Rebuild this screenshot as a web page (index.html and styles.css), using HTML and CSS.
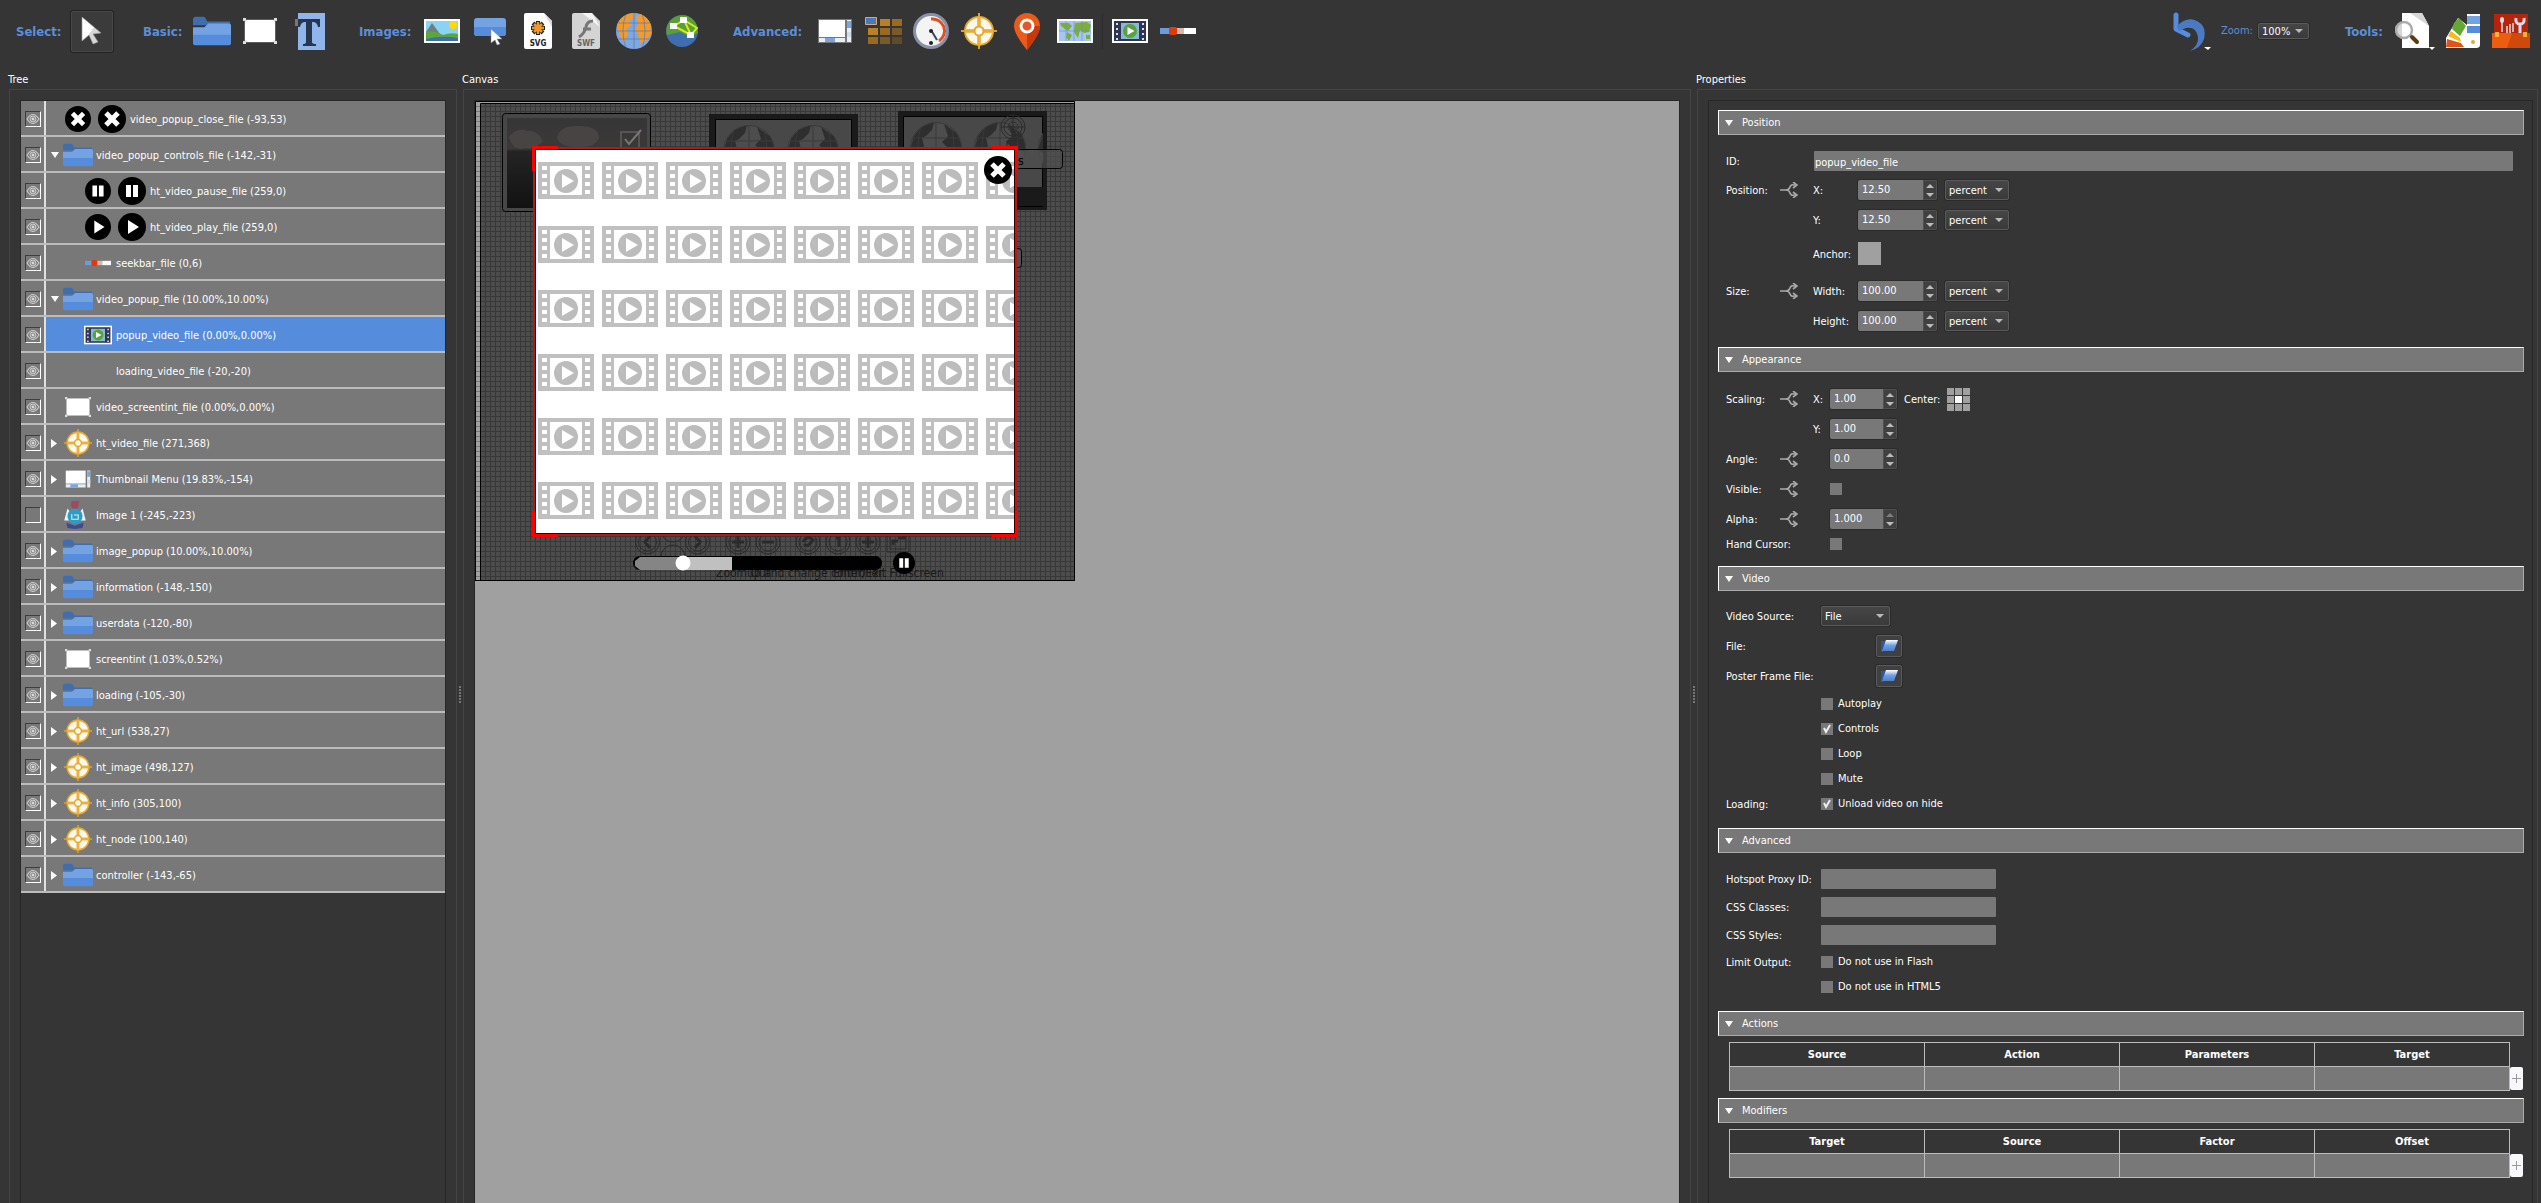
FILE: index.html
```html
<!DOCTYPE html>
<html lang="en">
<head>
<meta charset="utf-8">
<title>Skin Editor</title>
<link rel="stylesheet" href="styles.css">
</head>
<body>
<svg class="sprite" aria-hidden="true">
  <defs>
    <linearGradient id="cursorFill" x1="0" y1="0" x2="1" y2="1"><stop offset=".5" stop-color="#fff"/><stop offset=".5" stop-color="#d8d8d8"/></linearGradient>
    <linearGradient id="openFill" x1="0" y1="0" x2="0" y2="1"><stop offset="0" stop-color="#fff"/><stop offset=".5" stop-color="#6f9fe0"/><stop offset="1" stop-color="#4a80d0"/></linearGradient>
    <clipPath id="globeClip"><circle cx="18" cy="18" r="18"/></clipPath>
    <clipPath id="darkGlobeClip"><circle cx="26" cy="26" r="26"/></clipPath>
  </defs>
  <symbol id="folder" viewBox="0 0 40 30"><path fill="#3f6eb0" d="M0 3q0-3 3-3h8q2 0 4 5l24 0v4H0z"/><path fill="#74a3e3" d="M0 11h12l4-4h22q2 0 2 2v11H0z"/><path fill="#558cdc" d="M0 19h40v9q0 2-2 2H2q-2 0-2-2z"/></symbol>
  <symbol id="rect" viewBox="0 0 34 26"><path fill="none" stroke="#888" d="M2 2h30v22H2z"/><rect x="2" y="2" width="30" height="22" rx="2" fill="#fff"/><path fill="#ddd" d="M0 0h3v3H0zM31 0h3v3h-3zM0 23h3v3H0zM31 23h3v3h-3z"/></symbol>
  <symbol id="target" viewBox="0 0 36 36"><circle cx="18" cy="18" r="14" fill="#fff7ec" stroke="#e2a92f" stroke-width="2"/><path stroke="#dfa224" stroke-width="2" d="M18 0v36M0 18h36"/><path stroke="#eebc55" stroke-width="4" fill="none" d="M18 4v9M18 23v9M4 18h9M23 18h9"/><path stroke="#dfa224" stroke-width="1" d="M18 4v9M18 23v9M4 18h9M23 18h9"/><circle cx="18" cy="18" r="4.500" fill="#fff7ec" stroke="#e2a92f" stroke-width="2"/></symbol>
  <symbol id="thumbs" viewBox="0 0 34 24"><path fill="#777" d="M0 0h34v24H0z"/><path fill="#fff" d="M1 1h26v17H1z"/><path fill="#e8eef6" d="M29 1h4v22h-4zM1 19h26v4H1z"/><path fill="#7ba5dc" d="M29 2h4v7h-4zM7 19h10v4H7z"/><path fill="#d0ddeb" d="M29 13h4v5h-4z"/></symbol>
  <symbol id="film" viewBox="0 0 36 24"><path fill="#fff" d="M0 0h36v24H0z"/><path fill="#2d3552" d="M2 2h32v20H2z"/><path fill="#8ab6d8" d="M9 4h18v16H9z"/><circle cx="18" cy="12" r="7" fill="#54a33c"/><path fill="#fff" d="M15.500 8l7 4-7 4z"/><path stroke="#ddd" stroke-width="2" stroke-dasharray="2 3" d="M5 4v17M31 4v17"/></symbol>
  <symbol id="seek" viewBox="0 0 36 8"><path fill="#6a9bdc" d="M0 1h10v6H0z"/><path fill="#d9b7ad" d="M15 1h9v6h-9z"/><path fill="#fff" d="M24 1h12v6H24z"/><rect x="9" y="0" width="8" height="8" rx="2" fill="#e23a05"/></symbol>
  <symbol id="close" viewBox="0 0 28 28"><circle cx="14" cy="14" r="14"/><path stroke="#fff" stroke-width="5" d="M8 8l12 12M20 8L8 20"/></symbol>
  <symbol id="pause" viewBox="0 0 28 28"><circle cx="14" cy="14" r="14"/><path fill="#fff" d="M8 8h5v12H8zM15 8h5v12h-5z"/></symbol>
  <symbol id="play" viewBox="0 0 28 28"><circle cx="14" cy="14" r="14"/><path fill="#fff" d="M10 7l11 7-11 7z"/></symbol>
  <symbol id="badge" viewBox="0 0 20 26"><path fill="#a04a62" d="M7 0h7l-1 5-1 3H8L6 4z"/><path fill="#e7f3fa" d="M3 7l3 4h8l3-4 3 11H0z"/><circle cx="10" cy="14" r="7" fill="#2f9cc4"/><path fill="none" stroke="#d5eef8" stroke-width="1" d="M7 12v5h6v-4H9"/><path fill="#3b4c92" d="M2 20l8 3 8-3-1 5-7 1-7-1z"/></symbol>
  <symbol id="eye" viewBox="0 0 14 14"><path fill="none" stroke="#c8c8c8" stroke-width="1.200" d="M1 7q6-9 12 0-6 9-12 0z"/><circle cx="7" cy="7" r="3" fill="#9a9a9a" stroke="#ccc"/><circle cx="7" cy="7" r="1" fill="#eee"/></symbol>
  <symbol id="down" viewBox="0 0 8 6"><path fill="#fff" d="M0 0h8L4 6z"/></symbol>
  <symbol id="right" viewBox="0 0 6 9"><path fill="#fff" d="M0 0l6 4.500L0 9z"/></symbol>
  <symbol id="branch" viewBox="0 0 18 16"><path fill="none" stroke="#aaa" stroke-width="1.600" d="M0 8h6q3 0 4-3t4-2h2M6 8q3 0 4 3t4 2h2"/><path fill="none" stroke="#aaa" stroke-width="1.600" d="M13 0l4 3-4 3M13 10l4 3-4 3"/></symbol>
  <symbol id="open" viewBox="0 0 18 12"><path fill="#2c57a0" d="M1 1h5l1 2-4 9H1z"/><path fill="url(#openFill)" d="M6 0h12l-4 11H2z"/></symbol>
  <symbol id="up" viewBox="0 0 8 4"><path fill="#bbb" d="M0 4h8L4 0z"/></symbol>
  <symbol id="dn" viewBox="0 0 8 4"><path fill="#bbb" d="M0 0h8L4 4z"/></symbol>
  <symbol id="darkGlobe" viewBox="0 0 52 52"><circle cx="26" cy="26" r="26" fill="#4d4d4d"/><g clip-path="url(#darkGlobeClip)"><path fill="#2e2e2e" d="M4 14q8-12 20-14l-2 8-6 6-4 2 2 8-6 10-8-6zM34 2l14 10 6 18-14-2-8-8 6-6z"/><path fill="none" stroke="#3a3a3a" d="M0 16h52M0 27h52M26 0v52M12 0q-8 26 0 52M40 0q8 26 0 52"/></g><circle cx="26" cy="26" r="25.500" fill="none" stroke="#3a3a3a"/></symbol>
</svg>

<header class="toolbar">
  <div class="tool-group">
    <span class="tool-label label-select">Select:</span>
    <button class="tool tool-active" aria-label="Select"><svg width="22" height="28" viewBox="0 0 22 28"><path fill="url(#cursorFill)" stroke="#999" stroke-width=".6" d="M1 0l19 16-8 1 5 8-5 2-4-9-7 6z"/></svg></button>
  </div>
  <div class="tool-group">
    <span class="tool-label label-basic">Basic:</span>
    <button class="tool" aria-label="Container"><svg width="38" height="30"><use href="#folder"/></svg></button>
    <button class="tool" aria-label="Rectangle"><svg width="34" height="26"><use href="#rect"/></svg></button>
    <button class="tool" aria-label="Text"><svg width="36" height="37" viewBox="-5 0 36 37"><path fill="#8fb5ea" d="M3 0h27v37H3z"/><path fill="#777" d="M0 6h5v7H0z"/><path fill="#27364f" d="M3 6h22v8h-2q-1-5-5-5h-1v20q0 2 4 2v2H8v-2q3 0 3-2V9h-1q-4 0-5 5H3z"/></svg></button>
  </div>
  <div class="tool-group">
    <span class="tool-label label-images">Images:</span>
    <button class="tool" aria-label="Image"><svg width="36" height="24" viewBox="0 0 36 24"><path fill="#fff" d="M0 0h36v24H0z"/><path fill="#8ad3f3" d="M2 2h32v20H2z"/><path fill="#6f7f80" d="M2 13l6-9 8 11z"/><path fill="#5aa83c" d="M2 12q10 0 17 4 8-3 15-1v5H2z"/><path fill="#3f6eb0" d="M2 20q16-4 32-1v3H2z"/><circle cx="29" cy="6" r="4" fill="#ffd900"/></svg></button>
    <button class="tool" aria-label="Button"><svg width="32" height="27" viewBox="0 0 32 27"><rect width="32" height="18" rx="3" fill="#74a3e3"/><path fill="#558cdc" d="M0 9h32v6q0 3-3 3H3q-3 0-3-3z"/><path fill="#fff" stroke="#888" stroke-width=".5" d="M17 11l11 10-5 0 3 5-3 1-2-5-4 3z"/></svg></button>
    <button class="tool" aria-label="SVG"><svg width="28" height="36" viewBox="0 0 28 36"><path fill="#fff" d="M2 0h18l8 8v26q0 2-2 2H2q-2 0-2-2V2q0-2 2-2z"/><path fill="#d8d8d8" d="M20 0l8 14V8z"/><g stroke="#222" stroke-width="4"><path d="M14 8v14M7 15h14M9 10l10 10M19 10L9 20"/></g><g stroke="#f0972c" stroke-width="2.500"><path d="M14 9v12M8 15h12M10 11l8 8M18 11l-8 8"/></g><text class="file-tag" x="14" y="33">SVG</text></svg></button>
    <button class="tool" aria-label="SWF"><svg width="28" height="36" viewBox="0 0 28 36"><path fill="#d4d4d4" d="M2 0h18l8 8v26q0 2-2 2H2q-2 0-2-2V2q0-2 2-2z"/><path fill="#f5f5f5" d="M10 0h10l8 14z"/><path fill="none" stroke="#777" stroke-width="3" d="M21 8q-6 0-7 6t-7 10M11 16h8"/><text class="file-tag file-tag-dim" x="14" y="33">SWF</text></svg></button>
    <button class="tool" aria-label="Globe"><svg width="36" height="36" viewBox="0 0 36 36"><g clip-path="url(#globeClip)"><path fill="#7fa8e0" d="M0 0h36v36H0z"/><path fill="#f29a2e" d="M0 10Q6 0 18 0l-1 5-4 3 3 4-6 4 2 5-4 8-4-6zM20 4l5-4q8 4 11 12l-2 4 2 4-6 8-6 2-2-9-3-4 3-6z"/><path fill="none" stroke="#4a74b4" stroke-width=".6" d="M0 10h36M0 18h36M0 26h36M18 0v36M10 0q-6 18 0 36M26 0q6 18 0 36"/></g></svg></button>
    <button class="tool" aria-label="Map globe"><svg width="32" height="32" viewBox="0 0 32 32"><circle cx="16" cy="16" r="16" fill="#3f6eb0"/><path fill="#58a030" d="M3 7Q10-2 22 1q10 5 10 17l-8 4-10-5-13 3q-2-7 2-13z"/><path fill="none" stroke="#d8ea20" stroke-width="2" d="M8 11l10-6 7 15-17-9M18 5l13 8-6 7"/><path fill="#fff" d="M14 2h7v6h-7zM4 8h7v6H4zM21 17h7v6h-7z"/></svg></button>
  </div>
  <div class="tool-group">
    <span class="tool-label label-advanced">Advanced:</span>
    <button class="tool" aria-label="Thumbnail menu"><svg width="34" height="24"><use href="#thumbs"/></svg></button>
    <button class="tool" aria-label="Cloner"><svg width="37" height="28" viewBox="0 0 37 28"><path fill="#b98024" d="M15 2h10v7H15zM3 11h10v7H3z"/><path fill="#9a6a22" d="M27 2h10v7H27zM15 11h10v7H15zM3 20h10v7H3z"/><path fill="#7a5a28" d="M27 11h10v7H27zM15 20h10v7H15z"/><path fill="#5f4a2a" d="M27 20h10v7H27z"/><path fill="#4a78b8" stroke="#d9a778" d="M.5.5h11v7H.5z"/></svg></button>
    <button class="tool" aria-label="Timer"><svg width="36" height="36" viewBox="0 0 36 36"><circle cx="18" cy="18" r="16.500" fill="#f4f4f4" stroke="#8b8fa8" stroke-width="3"/><path fill="none" stroke="#d9531f" stroke-width="3" d="M18 6a12 12 0 0 1 8 22"/><path stroke="#3a4660" stroke-width="2" d="M18 17l6 10"/><circle cx="18" cy="18" r="2" fill="#222"/><circle cx="18" cy="30" r="2" fill="#222"/></svg></button>
    <button class="tool" aria-label="Hotspot template"><svg width="36" height="36"><use href="#target"/></svg></button>
    <button class="tool" aria-label="Marker"><svg width="26" height="37" viewBox="0 0 26 37"><path fill="#ea5a1b" d="M13 0a13 13 0 0 1 13 13q0 8-13 24Q0 21 0 13A13 13 0 0 1 13 0z"/><path fill="#c9380c" d="M13 13h13q0 8-13 24z"/><circle cx="13" cy="13" r="6" fill="#e2572a" stroke="#fff" stroke-width="3"/></svg></button>
    <button class="tool" aria-label="Map"><svg width="36" height="24" viewBox="0 0 36 24"><path fill="#fff" d="M0 0h36v24H0z"/><path fill="#a5c6ee" d="M2 2h32v20H2z"/><path fill="#7fae35" d="M3 4h9l3 3-4 5-3-2-4-3zM10 13l5 3-3 6-3-4zM18 4l12-1 4 3-2 7-5 1-4-3-2 8-4-6zM29 16h4v4h-4z"/><path stroke="#5b8fd9" stroke-width=".6" d="M9 2v20M17 2v20M25 2v20M2 12h32"/></svg></button>
    <span class="tool-divider"></span>
    <button class="tool" aria-label="Video"><svg width="36" height="24"><use href="#film"/></svg></button>
    <button class="tool" aria-label="Seekbar"><svg width="36" height="8"><use href="#seek"/></svg></button>
  </div>
  <div class="tool-group tool-group-end">
    <button class="tool tool-undo" aria-label="Undo"><svg width="38" height="39" viewBox="0 0 38 39"><path fill="none" stroke="#558cdc" stroke-width="5" stroke-linecap="round" stroke-linejoin="round" d="M3 3v14l12 6"/><path fill="#4a7ac4" d="M4 14Q14 4 24 9t7 18q-3 9-14 12 9-6 8-14-2-11-12-9l-7 3z"/><path fill="#fff" d="M31 35h7l-3 3z"/></svg></button>
    <label class="zoom-label" for="zoom">Zoom:</label>
    <select class="select select-zoom" id="zoom"><option>100%</option></select>
  </div>
  <div class="tool-group tool-group-last">
    <span class="tool-label label-tools">Tools:</span>
    <button class="tool" aria-label="Preview"><svg width="40" height="38" viewBox="0 0 40 38"><path fill="#fff" d="M7 1h20l7 13v22H7z"/><path fill="#d6d6d6" d="M15 1h12l7 13z"/><circle cx="9" cy="18" r="8" fill="#fff" fill-opacity=".8" stroke="#aaa" stroke-width="2.500"/><path stroke="#5b3c12" stroke-width="4" stroke-linecap="round" d="M17 25l5 5"/><path fill="#fff" d="M34 35h6l-3 3z"/></svg></button>
    <button class="tool" aria-label="Palette"><svg width="34" height="34" viewBox="0 0 34 34"><path fill="#fff" d="M0 34V24L12 4l9 7V0h13v31q0 3-4 3z"/><path fill="#62a833" d="M8 9l5-5 7 8-6 10-8-7z"/><path fill="#f6bd16" d="M5 17l9 7 1 4-13-6z"/><path fill="#e2531a" d="M1 25l14 4 3 4H0z"/><path fill="#74a3e3" d="M21 2h13v8H21z"/><path fill="#558cdc" d="M21 12h13v7H21z"/><circle cx="27" cy="28" r="2" fill="#e2a92f"/></svg></button>
    <button class="tool" aria-label="Toolbox"><svg width="38" height="34" viewBox="0 0 38 34"><path fill="#b5250c" d="M2 0h34v22H2z"/><path stroke="#e0e0e0" stroke-width="1.500" d="M10 6v12M15 12v7M18 10v9M21 9v9"/><ellipse cx="10" cy="6" rx="2" ry="3" fill="#e0e0e0"/><path fill="none" stroke="#dcdcf0" stroke-width="3" d="M24 4q-1 6 4 6t4-6M28 10v9"/><path fill="#ee5d0f" d="M0 19h38v15H0z"/><path fill="#cf4a0a" d="M20 19h18v15H15z"/><path fill="#f6b03c" d="M3 18h4v5H3zM31 18h4v5h-4z"/></svg></button>
  </div>
</header>

<main class="workspace">
  <section class="panel">
    <h2 class="panel-title">Tree</h2>
    <div class="panel-frame">
      <ul class="tree inner-frame">
        <li class="node"><button class="eye" aria-label="Toggle"><svg><use href="#eye"/></svg></button><div class="node-body"><span class="twist"></span><svg class="node-icon icon-round"><use href="#close"/></svg><svg class="node-icon"><use href="#close"/></svg><span class="node-name">video_popup_close_file (-93,53)</span></div></li>
        <li class="node"><button class="eye" aria-label="Toggle"><svg><use href="#eye"/></svg></button><div class="node-body"><span class="twist"><svg class="tw-down"><use href="#down"/></svg></span><svg class="node-icon"><use href="#folder"/></svg><span class="node-name">video_popup_controls_file (-142,-31)</span></div></li>
        <li class="node"><button class="eye" aria-label="Toggle"><svg><use href="#eye"/></svg></button><div class="node-body child"><span class="twist"></span><svg class="node-icon icon-round"><use href="#pause"/></svg><svg class="node-icon"><use href="#pause"/></svg><span class="node-name">ht_video_pause_file (259,0)</span></div></li>
        <li class="node"><button class="eye" aria-label="Toggle"><svg><use href="#eye"/></svg></button><div class="node-body child"><span class="twist"></span><svg class="node-icon icon-round"><use href="#play"/></svg><svg class="node-icon"><use href="#play"/></svg><span class="node-name">ht_video_play_file (259,0)</span></div></li>
        <li class="node"><button class="eye" aria-label="Toggle"><svg><use href="#eye"/></svg></button><div class="node-body child"><span class="twist"></span><svg class="node-icon icon-round"><use href="#seek"/></svg><span class="node-name">seekbar_file (0,6)</span></div></li>
        <li class="node"><button class="eye" aria-label="Toggle"><svg><use href="#eye"/></svg></button><div class="node-body"><span class="twist"><svg class="tw-down"><use href="#down"/></svg></span><svg class="node-icon"><use href="#folder"/></svg><span class="node-name">video_popup_file (10.00%,10.00%)</span></div></li>
        <li class="node"><button class="eye" aria-label="Toggle"><svg><use href="#eye"/></svg></button><div class="node-body child selected"><span class="twist"></span><svg class="node-icon icon-film"><use href="#film"/></svg><span class="node-name">popup_video_file (0.00%,0.00%)</span></div></li>
        <li class="node"><button class="eye" aria-label="Toggle"><svg><use href="#eye"/></svg></button><div class="node-body child"><span class="twist"></span><span class="node-icon"></span><span class="node-name">loading_video_file (-20,-20)</span></div></li>
        <li class="node"><button class="eye" aria-label="Toggle"><svg><use href="#eye"/></svg></button><div class="node-body"><span class="twist"></span><svg class="node-icon icon-round"><use href="#rect"/></svg><span class="node-name">video_screentint_file (0.00%,0.00%)</span></div></li>
        <li class="node"><button class="eye" aria-label="Toggle"><svg><use href="#eye"/></svg></button><div class="node-body"><span class="twist"><svg class="tw-right"><use href="#right"/></svg></span><svg class="node-icon"><use href="#target"/></svg><span class="node-name">ht_video_file (271,368)</span></div></li>
        <li class="node"><button class="eye" aria-label="Toggle"><svg><use href="#eye"/></svg></button><div class="node-body"><span class="twist"><svg class="tw-right"><use href="#right"/></svg></span><svg class="node-icon icon-round"><use href="#thumbs"/></svg><span class="node-name">Thumbnail Menu (19.83%,-154)</span></div></li>
        <li class="node"><button class="eye" aria-label="Toggle"></button><div class="node-body"><span class="twist"></span><svg class="node-icon icon-badge"><use href="#badge"/></svg><span class="node-name">Image 1 (-245,-223)</span></div></li>
        <li class="node"><button class="eye" aria-label="Toggle"><svg><use href="#eye"/></svg></button><div class="node-body"><span class="twist"><svg class="tw-right"><use href="#right"/></svg></span><svg class="node-icon"><use href="#folder"/></svg><span class="node-name">image_popup (10.00%,10.00%)</span></div></li>
        <li class="node"><button class="eye" aria-label="Toggle"><svg><use href="#eye"/></svg></button><div class="node-body"><span class="twist"><svg class="tw-right"><use href="#right"/></svg></span><svg class="node-icon"><use href="#folder"/></svg><span class="node-name">information (-148,-150)</span></div></li>
        <li class="node"><button class="eye" aria-label="Toggle"><svg><use href="#eye"/></svg></button><div class="node-body"><span class="twist"><svg class="tw-right"><use href="#right"/></svg></span><svg class="node-icon"><use href="#folder"/></svg><span class="node-name">userdata (-120,-80)</span></div></li>
        <li class="node"><button class="eye" aria-label="Toggle"><svg><use href="#eye"/></svg></button><div class="node-body"><span class="twist"></span><svg class="node-icon icon-round"><use href="#rect"/></svg><span class="node-name">screentint (1.03%,0.52%)</span></div></li>
        <li class="node"><button class="eye" aria-label="Toggle"><svg><use href="#eye"/></svg></button><div class="node-body"><span class="twist"><svg class="tw-right"><use href="#right"/></svg></span><svg class="node-icon"><use href="#folder"/></svg><span class="node-name">loading (-105,-30)</span></div></li>
        <li class="node"><button class="eye" aria-label="Toggle"><svg><use href="#eye"/></svg></button><div class="node-body"><span class="twist"><svg class="tw-right"><use href="#right"/></svg></span><svg class="node-icon"><use href="#target"/></svg><span class="node-name">ht_url (538,27)</span></div></li>
        <li class="node"><button class="eye" aria-label="Toggle"><svg><use href="#eye"/></svg></button><div class="node-body"><span class="twist"><svg class="tw-right"><use href="#right"/></svg></span><svg class="node-icon"><use href="#target"/></svg><span class="node-name">ht_image (498,127)</span></div></li>
        <li class="node"><button class="eye" aria-label="Toggle"><svg><use href="#eye"/></svg></button><div class="node-body"><span class="twist"><svg class="tw-right"><use href="#right"/></svg></span><svg class="node-icon"><use href="#target"/></svg><span class="node-name">ht_info (305,100)</span></div></li>
        <li class="node"><button class="eye" aria-label="Toggle"><svg><use href="#eye"/></svg></button><div class="node-body"><span class="twist"><svg class="tw-right"><use href="#right"/></svg></span><svg class="node-icon"><use href="#target"/></svg><span class="node-name">ht_node (100,140)</span></div></li>
        <li class="node"><button class="eye" aria-label="Toggle"><svg><use href="#eye"/></svg></button><div class="node-body"><span class="twist"><svg class="tw-right"><use href="#right"/></svg></span><svg class="node-icon"><use href="#folder"/></svg><span class="node-name">controller (-143,-65)</span></div></li>
      </ul>
    </div>
  </section>
  <div class="splitter"></div>
  <section class="panel">
    <h2 class="panel-title">Canvas</h2>
    <div class="panel-frame">
      <div class="canvas inner-frame">
        <svg class="stage" width="600" height="480" viewBox="0 0 600 480">
          <defs>
            <pattern id="grid" width="5" height="5" patternUnits="userSpaceOnUse"><path fill="#4c4c4c" d="M0 0h5v5H0z"/><path fill="#383838" d="M0 0h5v1H1v4H0z"/></pattern>
            <pattern id="ruler" width="6" height="5" patternUnits="userSpaceOnUse"><path fill="#a0a0a0" d="M0 0h6v5H0z"/><path fill="#777" d="M0 0h6v1H0z"/></pattern>
            <pattern id="reel" x="60" y="48" width="64" height="64" patternUnits="userSpaceOnUse"><path fill="#c0c0c0" fill-rule="evenodd" d="M3 13h56v37H3zM7 17v4h5v-4zM7 25v4h5v-4zM7 33v4h5v-4zM7 41v4h5v-4zM50 17v4h5v-4zM50 25v4h5v-4zM50 33v4h5v-4zM50 41v4h5v-4zM15 17v29h32V17z"/><circle cx="31" cy="32" r="12" fill="#bcbcbc"/><path fill="#fff" d="M27 25l12 7-12 7z"/></pattern>
            <clipPath id="thumb3"><path d="M429 16h139v89H429z"/></clipPath>
            <linearGradient id="photo" x1="0" y1="0" x2="0" y2="1"><stop offset="0" stop-color="#363636"/><stop offset=".34" stop-color="#3c3838"/><stop offset=".37" stop-color="#242424"/><stop offset="1" stop-color="#121212"/></linearGradient>
          </defs>
          <path fill="url(#ruler)" d="M0 0h600v480H0z"/>
          <path fill="url(#grid)" d="M6 3h594v477H6z"/>
          <path fill="none" stroke="#000" d="M.5 480V.5h599M5.500 480V2.500H600M599.500 0v479.500H0"/>
          <rect x="27.500" y="12.500" width="148" height="98" rx="3" fill="#474747" stroke="#000"/>
          <path fill="url(#photo)" d="M32 17h140v90H32z"/>
          <path fill="#484444" d="M34 36q8-10 18-6 10-2 16 10-8 9-18 7-12 4-16-11zM82 37q2-13 22-12 20 0 20 12-4 10-20 9-18 1-22-9z"/>
          <path fill="none" stroke="#555" stroke-width="2" d="M146 31h18v16h-18z"/><path fill="none" stroke="#777" stroke-width="2" d="M150 38l4 5 12-14"/>
          <path fill="#1a1a1a" d="M234 13h149v99H234z"/><path fill="#484848" stroke="#000" d="M240.500 18.500h136v90h-136z"/>
          <svg x="248" y="24" width="52" height="52"><use href="#darkGlobe"/></svg><svg x="312" y="24" width="52" height="52"><use href="#darkGlobe"/></svg>
          <path fill="#1a1a1a" d="M423 10h149v99H423z"/><path fill="#484848" stroke="#000" d="M428.500 15.500h139v90h-139z"/>
          <g clip-path="url(#thumb3)"><svg x="435" y="21" width="52" height="52"><use href="#darkGlobe"/></svg><svg x="499" y="21" width="52" height="52"><use href="#darkGlobe"/></svg><svg x="563" y="21" width="52" height="52"><use href="#darkGlobe"/></svg><path fill="#1a1a1a" d="M429 86h139v20H429z"/></g>
          <g fill="none" stroke="#2a2a2a"><circle cx="538" cy="26" r="12"/><circle cx="538" cy="26" r="9"/><circle cx="538" cy="26" r="5" stroke-dasharray="2 1"/><path d="M526 26h24M538 14v24M532 40h14v6h-14z"/></g>
          <rect x="500.500" y="48.500" width="87" height="19" rx="3" fill="#505050" fill-opacity=".7" stroke="#000"/><text class="stage-text" x="543" y="64">s</text>
          <rect x="500.500" y="147.500" width="46" height="19" rx="3" fill="#505050" stroke="#000"/>
          <g fill="none" stroke="#2a2a2a"><g stroke-width="1"><circle cx="172.500" cy="441" r="12"/><circle cx="172.500" cy="441" r="9"/><circle cx="198" cy="429" r="12"/><circle cx="198" cy="456" r="12"/><circle cx="222.500" cy="441" r="12"/><circle cx="222.500" cy="441" r="9"/><circle cx="263" cy="441" r="12"/><circle cx="263" cy="441" r="9"/><circle cx="293" cy="441" r="12"/><circle cx="293" cy="441" r="9"/><circle cx="333" cy="441" r="12"/><circle cx="333" cy="441" r="9"/><circle cx="363" cy="441" r="12"/><circle cx="363" cy="441" r="9"/><circle cx="393" cy="441" r="12"/><circle cx="393" cy="441" r="9"/><path d="M412 431h22v20h-22zM415 434h16v14h-16z"/></g><path stroke-width="3" d="M175 435l-5 6 5 6M220 435l5 6-5 6M257 441h12M263 435v12M287 441h12M328 441q5-8 10-2-5 8-9 4M361 437h3v9M387 441h12M393 435v12M418 444v-4h5M423 437h6v-3"/></g>
          <path fill="#fff" d="M61 49h478v383H61z"/><path fill="url(#reel)" d="M61 49h478v383H61z"/>
          <path fill="none" stroke="#b11a1a" stroke-width="2" d="M59 47h482v387H59z"/><path fill="none" stroke="#300" d="M60.500 48.500h479v384h-479z"/>
          <path fill="none" stroke="#f00" stroke-width="3" d="M58.500 70V46.500H83M517 46.500h24.500V70M541.500 410v24.500H517M83 434.500H58.500V410"/>
          <svg x="509" y="55" width="28" height="28"><use href="#close"/></svg>
          <g class="stage-text stage-text-dim"><text x="241" y="476">Zoom Out</text><text x="272" y="476">up and change controller</text><text x="358" y="476">Enter/Exit Fullscreen</text></g>
          <rect x="158.500" y="455.500" width="248" height="13" rx="6" stroke="#000"/><path fill="#858585" d="M165 456h45v13h-45l-5-4v-5z"/><path fill="#c0c0c0" d="M209 456h48v13h-48z"/><circle cx="208" cy="462" r="7.500" fill="#fff"/>
          <svg x="418" y="451" width="22" height="22"><use href="#pause"/></svg>
        </svg>
      </div>
    </div>
  </section>
  <div class="splitter"></div>
  <section class="panel">
    <h2 class="panel-title">Properties</h2>
    <div class="panel-frame frame-last">
      <form class="props inner-frame">
        <button type="button" class="bar"><svg><use href="#down"/></svg>Position</button>
        <div class="fields fields-first">
          <div class="row row-id"><label class="name name-id" for="pid">ID:</label><input class="text text-wide" id="pid" value="popup_video_file"></div>
          <div class="row"><span class="name">Position:</span><svg class="branch"><use href="#branch"/></svg><label class="axis axis-wide" for="px">X:</label><span class="spin"><input id="px" value="12.50"><span class="steps"><button type="button" aria-label="Up"><svg><use href="#up"/></svg></button><button type="button" aria-label="Down"><svg><use href="#dn"/></svg></button></span></span><select class="select" aria-label="X unit"><option>percent</option></select></div>
          <div class="row"><label class="axis axis-wide axis-only" for="py">Y:</label><span class="spin"><input id="py" value="12.50"><span class="steps"><button type="button" aria-label="Up"><svg><use href="#up"/></svg></button><button type="button" aria-label="Down"><svg><use href="#dn"/></svg></button></span></span><select class="select" aria-label="Y unit"><option>percent</option></select></div>
          <div class="row row-anchor"><span class="axis axis-wide axis-only">Anchor:</span><button type="button" class="anchor" aria-label="Anchor"></button></div>
          <div class="row"><span class="name">Size:</span><svg class="branch"><use href="#branch"/></svg><label class="axis axis-wide" for="pw">Width:</label><span class="spin"><input id="pw" value="100.00"><span class="steps"><button type="button" aria-label="Up"><svg><use href="#up"/></svg></button><button type="button" aria-label="Down"><svg><use href="#dn"/></svg></button></span></span><select class="select" aria-label="Width unit"><option>percent</option></select></div>
          <div class="row"><label class="axis axis-wide axis-only" for="ph">Height:</label><span class="spin"><input id="ph" value="100.00"><span class="steps"><button type="button" aria-label="Up"><svg><use href="#up"/></svg></button><button type="button" aria-label="Down"><svg><use href="#dn"/></svg></button></span></span><select class="select" aria-label="Height unit"><option>percent</option></select></div>
        </div>
        <button type="button" class="bar"><svg><use href="#down"/></svg>Appearance</button>
        <div class="fields">
          <div class="row"><span class="name">Scaling:</span><svg class="branch"><use href="#branch"/></svg><label class="axis" for="sx">X:</label><span class="spin spin-small"><input id="sx" value="1.00"><span class="steps"><button type="button" aria-label="Up"><svg><use href="#up"/></svg></button><button type="button" aria-label="Down"><svg><use href="#dn"/></svg></button></span></span><span class="center-label">Center:</span><span class="center-grid"><i></i><i></i><i></i><i></i><i class="on"></i><i></i><i></i><i></i><i></i></span></div>
          <div class="row"><label class="axis axis-only" for="sy">Y:</label><span class="spin spin-small"><input id="sy" value="1.00"><span class="steps"><button type="button" aria-label="Up"><svg><use href="#up"/></svg></button><button type="button" aria-label="Down"><svg><use href="#dn"/></svg></button></span></span></div>
          <div class="row"><label class="name" for="an">Angle:</label><svg class="branch"><use href="#branch"/></svg><span class="axis"></span><span class="spin spin-small"><input id="an" value="0.0"><span class="steps"><button type="button" aria-label="Up"><svg><use href="#up"/></svg></button><button type="button" aria-label="Down"><svg><use href="#dn"/></svg></button></span></span></div>
          <div class="row"><label class="name" for="vis">Visible:</label><svg class="branch"><use href="#branch"/></svg><span class="axis"></span><input type="checkbox" id="vis"></div>
          <div class="row"><label class="name" for="al">Alpha:</label><svg class="branch"><use href="#branch"/></svg><span class="axis"></span><span class="spin spin-small"><input id="al" value="1.000"><span class="steps"><button type="button" aria-label="Up" disabled><svg><use href="#up"/></svg></button><button type="button" aria-label="Down"><svg><use href="#dn"/></svg></button></span></span></div>
          <div class="row row-hand"><label class="name name-hand" for="hand">Hand Cursor:</label><input type="checkbox" id="hand"></div>
        </div>
        <button type="button" class="bar"><svg><use href="#down"/></svg>Video</button>
        <div class="fields fields-video">
          <div class="row"><label class="name name-long" for="src">Video Source:</label><select class="select select-source" id="src"><option>File</option></select></div>
          <div class="row"><span class="name name-long">File:</span><span class="file-name"></span><button type="button" class="browse" aria-label="Choose file"><svg><use href="#open"/></svg></button></div>
          <div class="row"><span class="name name-long">Poster Frame File:</span><span class="file-name"></span><button type="button" class="browse" aria-label="Choose poster"><svg><use href="#open"/></svg></button></div>
          <div class="row row-check"><span class="name name-long"></span><label class="check"><input type="checkbox">Autoplay</label></div>
          <div class="row row-check"><span class="name name-long"></span><label class="check"><input type="checkbox" checked>Controls</label></div>
          <div class="row row-check"><span class="name name-long"></span><label class="check"><input type="checkbox">Loop</label></div>
          <div class="row row-check"><span class="name name-long"></span><label class="check"><input type="checkbox">Mute</label></div>
          <div class="row row-check"><span class="name name-long">Loading:</span><label class="check"><input type="checkbox" checked>Unload video on hide</label></div>
        </div>
        <button type="button" class="bar"><svg><use href="#down"/></svg>Advanced</button>
        <div class="fields">
          <div class="row row-text"><label class="name name-long" for="proxy">Hotspot Proxy ID:</label><input class="text" id="proxy"></div>
          <div class="row row-text"><label class="name name-long" for="cls">CSS Classes:</label><input class="text" id="cls"></div>
          <div class="row row-text"><label class="name name-long" for="sty">CSS Styles:</label><input class="text" id="sty"></div>
          <div class="row row-check"><span class="name name-long">Limit Output:</span><label class="check"><input type="checkbox">Do not use in Flash</label></div>
          <div class="row row-check"><span class="name name-long"></span><label class="check"><input type="checkbox">Do not use in HTML5</label></div>
        </div>
        <button type="button" class="bar"><svg><use href="#down"/></svg>Actions</button>
        <div class="table-wrap">
          <table><thead><tr><th>Source</th><th>Action</th><th>Parameters</th><th>Target</th></tr></thead><tbody><tr><td></td><td></td><td></td><td></td></tr></tbody></table>
          <button type="button" class="add" aria-label="Add action"></button>
        </div>
        <button type="button" class="bar"><svg><use href="#down"/></svg>Modifiers</button>
        <div class="table-wrap">
          <table><thead><tr><th>Target</th><th>Source</th><th>Factor</th><th>Offset</th></tr></thead><tbody><tr><td></td><td></td><td></td><td></td></tr></tbody></table>
          <button type="button" class="add" aria-label="Add modifier"></button>
        </div>
      </form>
    </div>
  </section>
</main>
</body>
</html>
```
FILE: styles.css
```css
* { box-sizing: border-box; }

body {
  margin: 0;
  min-height: 100vh;
  display: flex;
  flex-direction: column;
  background: #353535;
  color: #fff;
  font: 11px/14px "DejaVu Sans Condensed", "DejaVu Sans", sans-serif;
}

button, input, select { font: inherit; color: inherit; margin: 0; padding: 0; border: 0; border-radius: 0; }
svg { display: block; flex: none; }
.sprite { position: absolute; width: 0; height: 0; }

/* toolbar */
.toolbar { display: flex; align-items: center; gap: 27px; height: 62px; padding: 0 6px 0 16px; }
.tool-group { display: flex; align-items: center; }
.tool-group-end { margin-left: auto; }
.tool-group-last { margin-left: 9px; }
.tool { width: 48px; height: 48px; background: none; display: flex; align-items: center; justify-content: center; }
.tool-active { width: 44px; height: 43px; margin: 0 2px; background: #3b3b3b; border: 1px solid #222; border-radius: 3px; box-shadow: inset 0 0 0 1px #484848; }
.tool-undo { width: 44px; }
.tool-label { color: #5b8fd9; font-size: 13px; line-height: 16px; font-weight: bold; flex: none; padding-top: 1px; }
.label-select { width: 52px; }
.label-basic { width: 45px; }
.label-images { width: 59px; }
.label-advanced { width: 78px; }
.label-tools { width: 46px; }
.tool-divider { width: 1px; height: 36px; margin: 0 3px; background: #2c2c2c; }
.zoom-label { color: #5b8fd9; width: 37px; margin-left: 7px; }
.file-tag { font: bold 8px "DejaVu Sans Condensed", sans-serif; text-anchor: middle; fill: #222; }
.file-tag-dim { fill: #666; }

/* panels */
.workspace { flex: 1; display: grid; grid-template-columns: 448fr 6px 1228fr 6px 841fr; padding: 0 3px 0 9px; }
.panel { display: flex; flex-direction: column; min-width: 0; }
.panel-title { margin: 0 -1px; height: 27px; padding-top: 11px; font-size: 11px; line-height: 14px; font-weight: normal; }
.panel-frame { flex: 1; display: flex; border: 1px solid #454545; border-bottom: 0; padding: 10px 10px 0; }
.frame-last { padding-right: 4px; }
.inner-frame { flex: 1; min-width: 0; border: 1px solid #272727; border-bottom: 0; }
.splitter { display: flex; align-items: center; justify-content: center; padding-top: 124px; }
.splitter::before { content: ""; width: 2px; height: 18px; background: repeating-linear-gradient(#777 0 2px, transparent 2px 3px); }

/* tree */
.tree { margin: 0; padding: 0; list-style: none; }
.node { display: flex; height: 36px; background: #787878; border-bottom: 2px solid #bcbcbc; }
.eye { flex: none; width: 16px; height: 16px; margin: 10px 3px 8px 4px; background: #787878; border: 1px solid #3d3d3d; border-right-color: #fff; border-bottom-color: #fff; }
.eye svg { width: 14px; height: 14px; }
.node-body { flex: 1; display: flex; align-items: center; gap: 4px; height: 34px; padding-top: 2px; border-left: 2px solid #e0e0e0; }
.node-name { padding-top: 2px; margin-left: -1px; }
.twist { width: 13px; padding-left: 5px; }
.tw-down { width: 8px; height: 6px; }
.tw-right { width: 6px; height: 9px; }
.node-icon { width: 30px; height: 28px; }
.icon-round { padding: 1px 2px; }
.icon-film { padding: 1px; }
.icon-badge { padding-right: 6px; }
.child { padding-left: 20px; }
.selected { background-color: #558cdc; }

/* canvas */
.canvas { background: #a0a0a0; overflow: hidden; }
.stage-text { font: 12px "DejaVu Sans Condensed", sans-serif; fill: #000; }
.stage-text-dim { fill: #1a1a1a; }

/* properties */
.props { padding: 9px 8px 0 9px; }
.bar { display: flex; align-items: center; gap: 9px; width: 100%; height: 25px; padding: 1px 0 0 6px; text-align: left; background: #787878; border: 1px solid #aaa; border-top-color: #fff; border-left-color: #fff; }
.bar svg { width: 8px; height: 6px; }
.fields { padding: 12px 11px 12px 8px; }
.fields-first { padding-bottom: 11px; }
.fields-video { padding-top: 10px; }
.row { display: flex; align-items: center; height: 30px; }
.row-id { height: 28px; }
.row-anchor { height: 41px; padding-bottom: 4px; }
.row-hand { height: 20px; }
.row-check { height: 25px; }
.row-text { height: 28px; }
.name { flex: none; width: 54px; padding-top: 2px; }
.name-id { width: 88px; }
.name-hand { width: 104px; }
.name-long { width: 95px; }
.branch { width: 18px; height: 16px; margin-right: 15px; }
.axis { flex: none; width: 17px; padding-top: 2px; }
.axis-wide { width: 45px; }
.axis-only { margin-left: 87px; }
.text { width: 175px; height: 20px; padding: 2px 1px 0; background: #787878; border-radius: 1px; }
.text-wide { flex: 1; }
.spin { display: flex; width: 79px; height: 20px; margin-right: 8px; border-radius: 2px; overflow: hidden; box-shadow: 0 0 0 1px #2b2b2b; }
.spin-small { width: 67px; margin-right: 7px; }
.spin input { flex: 1; min-width: 0; padding-left: 4px; background: #787878; }
.steps { width: 14px; display: flex; flex-direction: column; border: 1px solid #505050; background: #404040; }
.steps button { flex: 1; display: flex; align-items: center; justify-content: center; background: none; }
.steps button:disabled { opacity: .5; }
.steps svg { width: 8px; height: 4px; }
.select { appearance: none; width: 64px; height: 20px; padding: 1px 0 0 3px; border: 1px solid #5a5a5a; border-radius: 2px; box-shadow: 0 0 0 1px #2b2b2b; background: url("data:image/svg+xml,%3Csvg xmlns='http://www.w3.org/2000/svg' width='8' height='4'%3E%3Cpath fill='%23bbb' d='M0 0h8L4 4z'/%3E%3C/svg%3E") no-repeat right 5px center, linear-gradient(#464646, #3a3a3a); }
.select-zoom { width: 51px; height: 16px; line-height: 12px; }
.select-source { width: 69px; }
.anchor { width: 23px; height: 23px; background: #a0a0a0; }
.center-label { width: 43px; padding-top: 2px; }
.center-grid { display: grid; grid-template-columns: repeat(3, 7px); grid-auto-rows: 7px; gap: 1px; }
.center-grid i { background: #a0a0a0; }
.center-grid .on { background: #fff; }
.file-name { width: 55px; }
.browse { display: flex; align-items: center; justify-content: center; width: 26px; height: 22px; border: 1px solid #5a5a5a; border-radius: 2px; box-shadow: 0 0 0 1px #2b2b2b; background: #404040; }
.browse svg { width: 18px; height: 12px; }
.check { display: flex; align-items: center; gap: 5px; }
input[type="checkbox"] { appearance: none; width: 12px; height: 12px; background: #787878; }
input[type="checkbox"]:checked { background: #787878 url("data:image/svg+xml,%3Csvg xmlns='http://www.w3.org/2000/svg' width='12' height='12'%3E%3Cpath fill='none' stroke='%23eee' stroke-width='2' d='M3 5l2 4 4-7'/%3E%3C/svg%3E"); }

/* tables */
.table-wrap { display: flex; align-items: flex-end; padding: 6px 1px 7px 11px; }
table { flex: 1; width: 100%; table-layout: fixed; border-collapse: collapse; }
th, td { height: 24px; padding: 0; border: 1px solid #bcbcbc; text-align: center; }
td { background: #787878; }
.add { flex: none; width: 13px; height: 23px; margin-bottom: 1px; border-radius: 2px; background: linear-gradient(#999, #999) center / 9px 1px no-repeat, linear-gradient(#999, #999) center / 1px 9px no-repeat, #f8f8fc; }
```
